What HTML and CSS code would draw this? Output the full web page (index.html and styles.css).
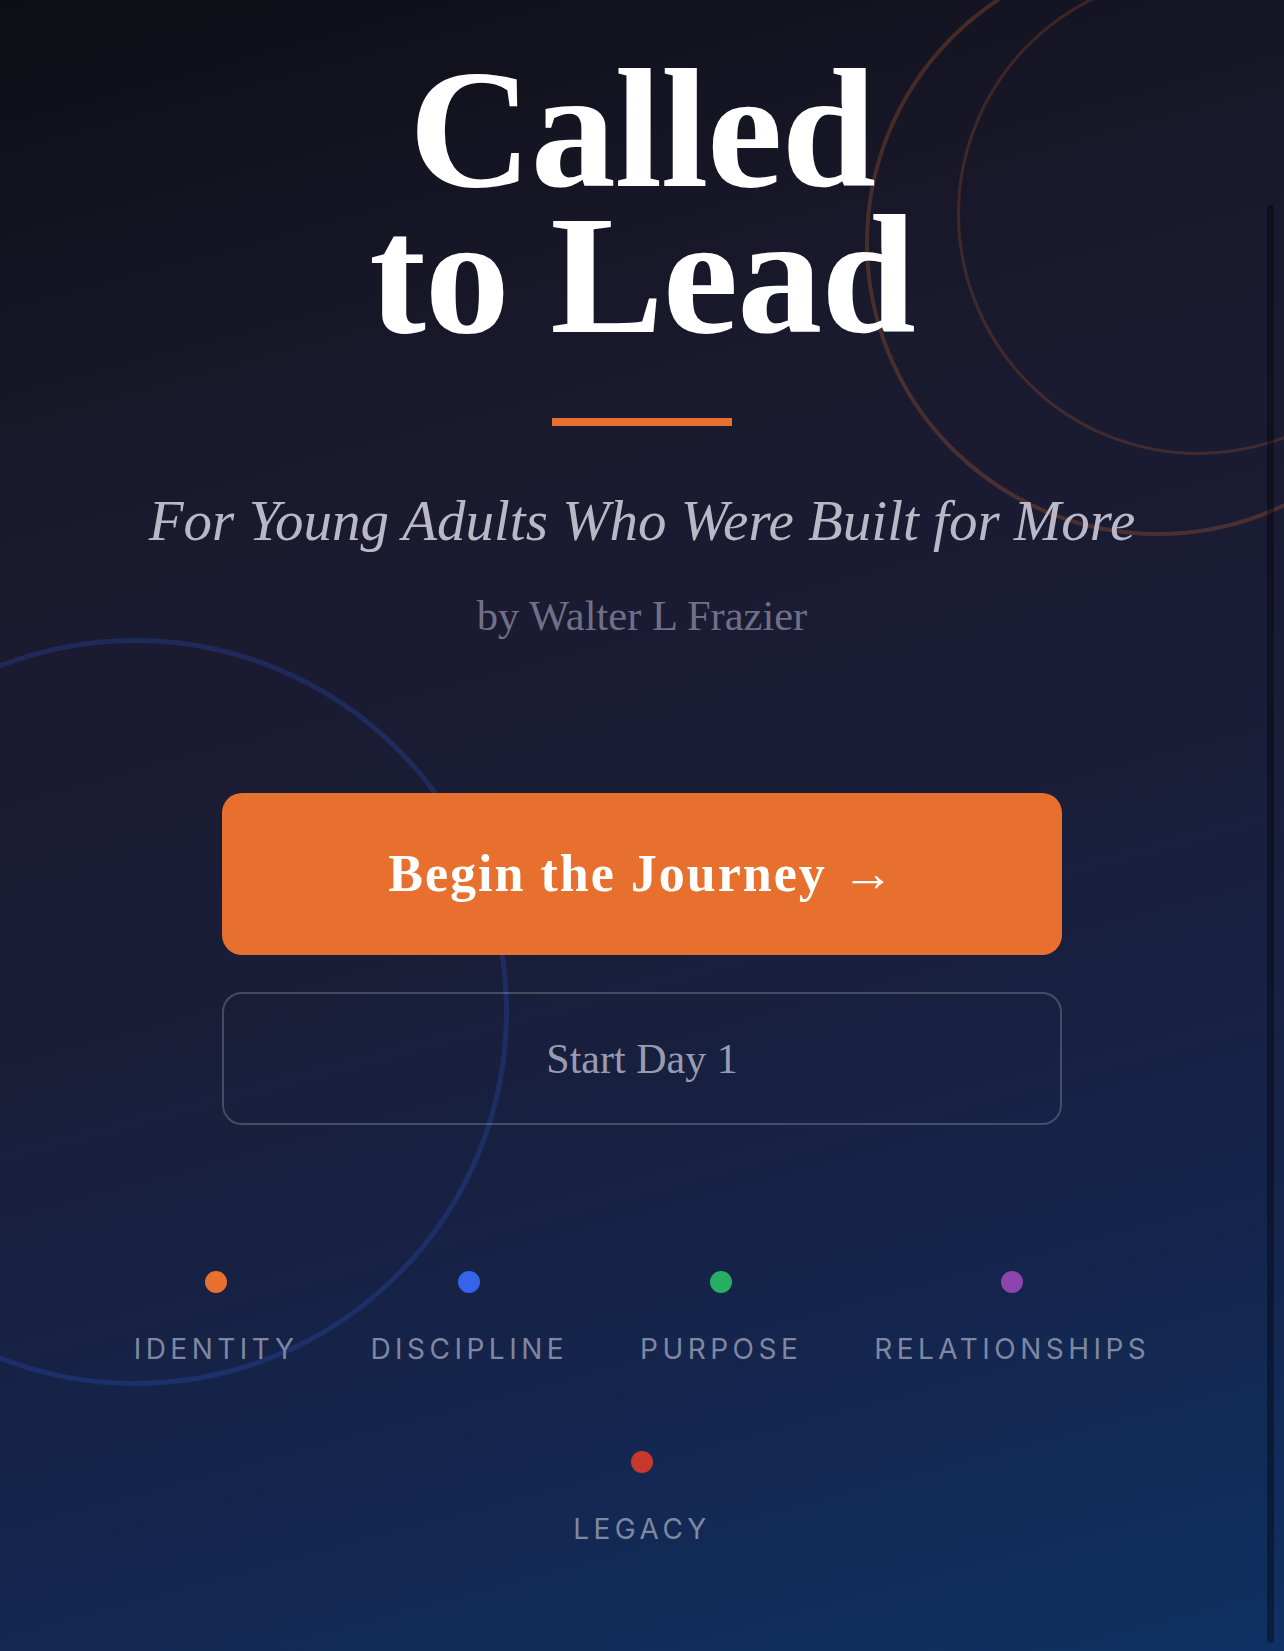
FILE: index.html
```html
<!DOCTYPE html>
<html lang="en">
<head>
<meta charset="utf-8">
<title>Called to Lead</title>
<link rel="stylesheet" href="styles.css">
</head>
<body>
<div class="page">
  <div class="ring ring-outer"></div>
  <div class="ring ring-inner"></div>
  <div class="ring ring-blue"></div>

  <main class="hero">
    <h1 class="title"><span class="title-line">Called</span><span class="title-line">to Lead</span></h1>
    <div class="rule"></div>
    <p class="subtitle">For Young Adults Who Were Built for More</p>
    <p class="author">by Walter L Frazier</p>

    <div class="actions">
      <a class="btn btn-primary" href="#">Begin the Journey →</a>
      <a class="btn btn-secondary" href="#">Start Day 1</a>
    </div>

    <ul class="pillars">
      <li class="pillar"><span class="dot dot-identity"></span><span class="pillar-label">IDENTITY</span></li>
      <li class="pillar"><span class="dot dot-discipline"></span><span class="pillar-label">DISCIPLINE</span></li>
      <li class="pillar"><span class="dot dot-purpose"></span><span class="pillar-label">PURPOSE</span></li>
      <li class="pillar"><span class="dot dot-relationships"></span><span class="pillar-label">RELATIONSHIPS</span></li>
      <li class="pillar"><span class="dot dot-legacy"></span><span class="pillar-label">LEGACY</span></li>
    </ul>
  </main>

  <div class="scroll-indicator"></div>
</div>
</body>
</html>
```

FILE: styles.css
```css
* {
  box-sizing: border-box;
}

html, body {
  margin: 0;
  padding: 0;
}

body {
  background: #141428;
}

.page {
  position: relative;
  width: 100%;
  height: 1651px;
  overflow: hidden;
  background: linear-gradient(165deg, #0e0e16 0%, #1a1a2e 28%, #1a1d37 52%, #15244b 76%, #0f3163 100%);
}

/* decorative rings */
.ring {
  position: absolute;
  border-radius: 50%;
  pointer-events: none;
  z-index: 0;
}

.ring-outer {
  left: 865px;
  top: -50px;
  width: 586px;
  height: 586px;
  border: 4px solid rgba(232, 112, 47, 0.24);
}

.ring-inner {
  left: 957px;
  top: -27px;
  width: 482px;
  height: 482px;
  border: 3px solid rgba(232, 112, 47, 0.19);
}

.ring-blue {
  left: -239px;
  top: 638px;
  width: 748px;
  height: 748px;
  border: 5px solid rgba(45, 85, 200, 0.27);
}

.scroll-indicator {
  position: absolute;
  left: 1267px;
  top: 205px;
  width: 7px;
  height: 1438px;
  border-radius: 4px;
  background: rgba(0, 0, 0, 0.38);
  z-index: 2;
}

/* hero content */
.hero {
  position: relative;
  z-index: 1;
  display: flex;
  flex-direction: column;
  align-items: center;
  text-align: center;
}

.title {
  margin: 56px 0 0;
  font-family: "Liberation Serif", "Times New Roman", serif;
  font-weight: 700;
  font-size: 170px;
  line-height: 146px;
  letter-spacing: -1px;
  color: #ffffff;
}

.title-line {
  display: block;
}

.rule {
  width: 180px;
  height: 8px;
  margin-top: 70px;
  background: #e8702f;
}

.subtitle {
  margin: 61px 0 0;
  font-family: "Liberation Serif", "Times New Roman", serif;
  font-style: italic;
  font-size: 57px;
  line-height: 1.2;
  color: #bab8c6;
}

.author {
  margin: 35px 0 0;
  font-family: "Liberation Serif", "Times New Roman", serif;
  font-size: 42.5px;
  line-height: 1.2;
  color: #716f88;
}

.actions {
  margin-top: 152px;
  width: 840px;
  display: flex;
  flex-direction: column;
  gap: 37px;
}

.btn {
  display: flex;
  align-items: center;
  justify-content: center;
  border-radius: 20px;
  text-decoration: none;
  font-family: "Liberation Serif", "Times New Roman", serif;
  line-height: 1.2;
}

.btn-primary {
  height: 162px;
  background: #e8702f;
  color: #ffffff;
  font-weight: 700;
  font-size: 52px;
  letter-spacing: 2px;
}

.btn-secondary {
  height: 133px;
  border: 2px solid rgba(255, 255, 255, 0.2);
  background: transparent;
  color: #9a9bb0;
  font-size: 42px;
}

/* pillars */
.pillars {
  list-style: none;
  margin: 146px 0 0;
  padding: 0;
  width: 1100px;
  display: flex;
  flex-wrap: wrap;
  justify-content: center;
  column-gap: 72px;
  row-gap: 84px;
}

.pillar {
  display: flex;
  flex-direction: column;
  align-items: center;
  gap: 40px;
}

.dot {
  width: 22px;
  height: 22px;
  border-radius: 50%;
}

.dot-identity { background: #e8702f; }
.dot-discipline { background: #3563e9; }
.dot-purpose { background: #27ae60; }
.dot-relationships { background: #8e44ad; }
.dot-legacy { background: #c9392b; }

.pillar-label {
  font-family: Inter, "Liberation Sans", sans-serif;
  font-size: 28px;
  line-height: 1.2;
  letter-spacing: 0.16em;
  color: #7f87a1;
}
```
